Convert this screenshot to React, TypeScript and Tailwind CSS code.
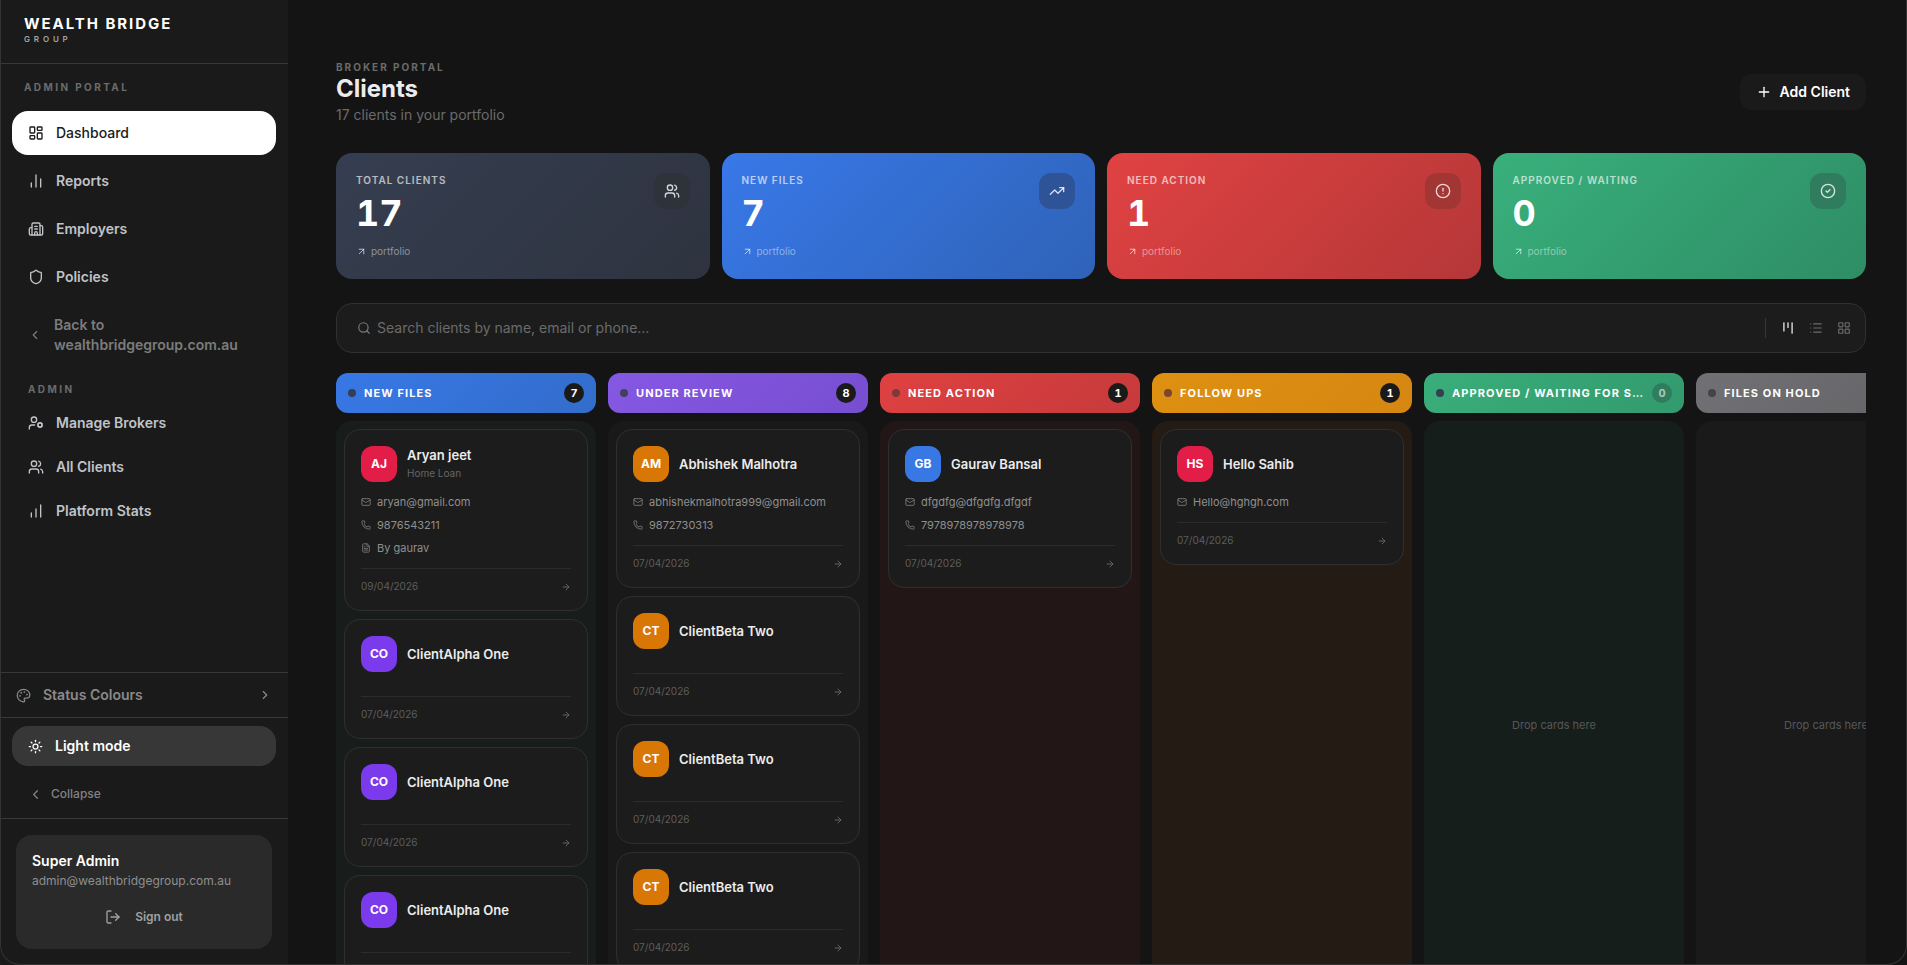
import { useState } from 'react';
import {
  ArrowRight,
  ArrowUpRight,
  Building2,
  ChartNoAxesColumn,
  ChartNoAxesColumnIncreasing,
  ChevronLeft,
  ChevronRight,
  CircleAlert,
  CircleCheck,
  FileText,
  Kanban,
  LayoutDashboard,
  LayoutGrid,
  List,
  LogOut,
  Mail,
  Palette,
  Phone,
  Plus,
  Search,
  Shield,
  Sun,
  TrendingUp,
  UserCog,
  Users,
  type LucideIcon,
} from 'lucide-react';
import clsx from 'clsx';

interface Client {
  initials: string;
  name: string;
  color: string;
  date: string;
  loan?: string;
  email?: string;
  phone?: string;
  by?: string;
}

interface Column {
  title: string;
  count: number;
  header: string;
  dot: string;
  body: string;
  clients: Client[];
}

const alphaOne: Client = { initials: 'CO', name: 'ClientAlpha One', color: 'bg-[#7c3aed]', date: '07/04/2026' };
const betaTwo: Client = { initials: 'CT', name: 'ClientBeta Two', color: 'bg-[#d97706]', date: '07/04/2026' };

const columns: Column[] = [
  {
    title: 'New Files',
    count: 7,
    header: 'bg-linear-135 from-[#3878e6] to-[#336dcb]',
    dot: 'bg-[#353f52]',
    body: 'bg-[#181d1b]',
    clients: [
      {
        initials: 'AJ',
        name: 'Aryan jeet',
        color: 'bg-[#e11d48]',
        date: '09/04/2026',
        loan: 'Home Loan',
        email: 'aryan@gmail.com',
        phone: '9876543211',
        by: 'By gaurav',
      },
      ...Array<Client>(6).fill(alphaOne),
    ],
  },
  {
    title: 'Under Review',
    count: 8,
    header: 'bg-linear-135 from-[#8558e3] to-[#774ed0]',
    dot: 'bg-[#42405c]',
    body: 'bg-[#191919]',
    clients: [
      {
        initials: 'AM',
        name: 'Abhishek Malhotra',
        color: 'bg-[#d97706]',
        date: '07/04/2026',
        email: 'abhishekmalhotra999@gmail.com',
        phone: '9872730313',
      },
      ...Array<Client>(7).fill(betaTwo),
    ],
  },
  {
    title: 'Need Action',
    count: 1,
    header: 'bg-linear-135 from-[#df4141] to-[#c63a3b]',
    dot: 'bg-[#7c3a39]',
    body: 'bg-[#231616]',
    clients: [
      {
        initials: 'GB',
        name: 'Gaurav Bansal',
        color: 'bg-[#3878e4]',
        date: '07/04/2026',
        email: 'dfgdfg@dfgdfg.dfgdf',
        phone: '7978978978978978',
      },
    ],
  },
  {
    title: 'Follow Ups',
    count: 1,
    header: 'bg-linear-135 from-[#de9011] to-[#d68712]',
    dot: 'bg-[#7a4631]',
    body: 'bg-[#241b15]',
    clients: [
      {
        initials: 'HS',
        name: 'Hello Sahib',
        color: 'bg-[#e11d48]',
        date: '07/04/2026',
        email: 'Hello@hghgh.com',
      },
    ],
  },
  {
    title: 'Approved / Waiting for Settlement',
    count: 0,
    header: 'bg-linear-135 from-[#39ae7a] to-[#339a6e]',
    dot: 'bg-[#353f52]',
    body: 'bg-[#161e1b]',
    clients: [],
  },
  {
    title: 'Files on Hold',
    count: 0,
    header: 'bg-linear-135 from-[#717175] to-[#636366]',
    dot: 'bg-[#444444]',
    body: 'bg-[#1a1a1a]',
    clients: [],
  },
];

const stats: { label: string; value: number; icon: LucideIcon; bg: string; iconBg: string }[] = [
  { label: 'Total Clients', value: 17, icon: Users, bg: 'bg-linear-135 from-[#353e50] to-[#2e333f]', iconBg: 'bg-[#2e323a]' },
  { label: 'New Files', value: 7, icon: TrendingUp, bg: 'bg-linear-135 from-[#3878e8] to-[#2f63b8]', iconBg: 'bg-[#2e5497]' },
  { label: 'Need Action', value: 1, icon: CircleAlert, bg: 'bg-linear-135 from-[#e14242] to-[#b53738]', iconBg: 'bg-[#a13635]' },
  { label: 'Approved / Waiting', value: 0, icon: CircleCheck, bg: 'bg-linear-135 from-[#39b07c] to-[#2e8d65]', iconBg: 'bg-[#2f7d5e]' },
];

const views: { label: string; icon: LucideIcon }[] = [
  { label: 'Board view', icon: Kanban },
  { label: 'List view', icon: List },
  { label: 'Grid view', icon: LayoutGrid },
];

function NavItem({ icon: Icon, label, active, compact }: { icon: LucideIcon; label: string; active?: boolean; compact?: boolean }) {
  return (
    <a
      href="#"
      className={clsx(
        'flex items-center gap-3 rounded-2xl px-4 text-sm',
        compact ? 'h-10' : 'h-11',
        active ? 'bg-white font-medium text-[#1a1a1a]' : 'font-semibold text-[#c0c3c7]',
      )}
    >
      <Icon className="size-4 shrink-0" />
      {label}
    </a>
  );
}

function Sidebar() {
  return (
    <aside className="flex w-72 shrink-0 flex-col bg-[#1a1a1a]">
      <div className="flex h-16 flex-col border-b border-[#373737] px-6 pt-3.5">
        <span className="text-[15px] leading-5 font-bold tracking-[0.13em] text-white">WEALTH BRIDGE</span>
        <span className="text-[8px] leading-2.5 font-semibold tracking-[0.48em] text-[#a3a3a3]">GROUP</span>
      </div>

      <nav className="flex flex-1 flex-col px-3">
        <p className="mt-[15px] mb-4 px-3 text-[10px] leading-4 font-bold tracking-[0.24em] text-[#6b6b6b]">ADMIN PORTAL</p>
        <div className="flex flex-col gap-1">
          <NavItem icon={LayoutDashboard} label="Dashboard" active />
          <NavItem icon={ChartNoAxesColumn} label="Reports" />
          <NavItem icon={Building2} label="Employers" />
          <NavItem icon={Shield} label="Policies" />
        </div>
        <a href="#" className="mt-4 flex items-center gap-3 px-4 text-sm leading-5 font-semibold text-[#7c7c7c]">
          <ChevronLeft className="size-3.5 shrink-0" />
          <span>
            Back to
            <br />
            wealthbridgegroup.com.au
          </span>
        </a>
        <p className="mt-6.5 mb-1.5 px-4 text-[10px] leading-4 font-bold tracking-[0.24em] text-[#6b6b6b]">ADMIN</p>
        <div className="flex flex-col gap-1">
          <NavItem icon={UserCog} label="Manage Brokers" compact />
          <NavItem icon={Users} label="All Clients" compact />
          <NavItem icon={ChartNoAxesColumnIncreasing} label="Platform Stats" compact />
        </div>
      </nav>

      <button className="flex h-[45px] items-center gap-3 border-t border-[#373737] px-4 text-sm font-semibold text-[#8a8a8a]">
        <Palette className="size-[15px]" />
        <span className="flex-1 text-left">Status Colours</span>
        <ChevronRight className="size-3.5" />
      </button>
      <div className="flex flex-col gap-2 border-t border-[#373737] px-3 py-2">
        <button className="flex h-10 items-center gap-3 rounded-2xl bg-[#373737] px-4 text-sm font-semibold text-white">
          <Sun className="size-[15px]" />
          Light mode
        </button>
        <button className="flex h-9 items-center gap-2 px-4 pt-1 text-xs font-medium text-[#828282]">
          <ChevronLeft className="size-[15px]" />
          Collapse
        </button>
      </div>
      <div className="border-t border-[#373737] p-4">
        <div className="flex flex-col rounded-2xl bg-[#2a2a2a] px-4 pt-4 pb-3.5">
          <span className="text-sm leading-5 font-semibold text-white">Super Admin</span>
          <span className="text-xs leading-5 text-[#8f8f8f]">admin@wealthbridgegroup.com.au</span>
          <button className="mt-2 flex h-9 items-center justify-center gap-3.5 text-xs font-semibold text-[#a0a0a0]">
            <LogOut className="size-4" />
            Sign out
          </button>
        </div>
      </div>
    </aside>
  );
}

function StatCard({ label, value, icon: Icon, bg, iconBg }: (typeof stats)[number]) {
  return (
    <div className={clsx('flex h-[126px] items-start justify-between rounded-2xl p-5', bg)}>
      <div className="flex flex-col">
        <span className="text-[10px] leading-3.5 font-semibold tracking-[0.1em] text-white/65 uppercase">{label}</span>
        <span className="mt-1.5 text-4xl leading-10 font-bold text-white tabular-nums">{value}</span>
        <span className="mt-2.5 flex items-center gap-1 text-[10px] leading-4 text-white/45">
          <ArrowUpRight className="size-[11px] text-white/70" />
          portfolio
        </span>
      </div>
      <span className={clsx('flex size-9 items-center justify-center rounded-xl text-white/80', iconBg)}>
        <Icon className="size-4" />
      </span>
    </div>
  );
}

function ClientCard({ client }: { client: Client }) {
  const details = [
    { icon: Mail, text: client.email },
    { icon: Phone, text: client.phone },
    { icon: FileText, text: client.by },
  ].filter((d) => d.text);

  return (
    <article className="shrink-0 rounded-2xl border border-[#2d3032] bg-[#1c1c1c] p-4">
      <div className="flex h-9 items-center gap-2.5">
        <span className={clsx('flex size-9 items-center justify-center rounded-xl text-xs font-bold text-white', client.color)}>
          {client.initials}
        </span>
        <div className="flex flex-col">
          <span className="text-[13px] leading-[18px] font-semibold text-[#ececec]">{client.name}</span>
          {client.loan && <span className="text-[10px] leading-[18px] text-[#666666]">{client.loan}</span>}
        </div>
      </div>
      <div className="my-3 flex flex-col gap-[7px]">
        {details.map(({ icon: Icon, text }) => (
          <div key={text} className="flex items-center gap-1.5 text-[11px] leading-4 text-[#8f8f8f]">
            <Icon className="size-2.5 text-[#808080]" />
            {text}
          </div>
        ))}
      </div>
      <div className="flex items-center justify-between border-t border-[#2b2b2b] pt-2.5 text-[10px] leading-[15px] text-[#5c5c5c]">
        <span>{client.date}</span>
        <ArrowRight className="size-2.5 text-[#707070]" />
      </div>
    </article>
  );
}

function BoardColumn({ column }: { column: Column }) {
  return (
    <section className="flex w-[260px] shrink-0 flex-col gap-2">
      <header className={clsx('flex h-10 shrink-0 items-center gap-2 rounded-xl px-3', column.header)}>
        <span className={clsx('size-2 shrink-0 rounded-full', column.dot)} />
        <h2 className="flex-1 truncate text-[11px] font-bold tracking-[0.1em] text-white uppercase">{column.title}</h2>
        <span
          className={clsx(
            'flex size-5 shrink-0 items-center justify-center rounded-full text-[11px] font-bold tabular-nums',
            column.count > 0 ? 'bg-[#1a1a1a] text-white' : 'bg-[#2f7d5e] text-white/60',
          )}
        >
          {column.count}
        </span>
      </header>
      <div className={clsx('flex h-[608px] shrink-0 flex-col gap-2 overflow-hidden rounded-2xl p-2', column.body)}>
        {column.clients.length > 0 ? (
          column.clients.map((client, i) => <ClientCard key={i} client={client} />)
        ) : (
          <p className="m-auto text-[11px] text-[#575757]">Drop cards here</p>
        )}
      </div>
    </section>
  );
}

export default function App() {
  const [view, setView] = useState('Board view');

  return (
    <div className="relative flex h-screen overflow-hidden bg-[#141414] font-['Inter',sans-serif]">
      <Sidebar />

      <main className="flex min-w-0 flex-1 flex-col overflow-hidden pt-[59px] pr-[41px] pl-12">
        <div className="flex items-center justify-between">
          <div className="flex flex-col">
            <span className="text-[10px] leading-4 font-bold tracking-[0.2em] text-[#6b6b6b]">BROKER PORTAL</span>
            <h1 className="text-2xl leading-7 font-bold text-[#ececec]">Clients</h1>
            <p className="mt-0.5 text-sm leading-5 text-[#6b6b6b]">17 clients in your portfolio</p>
          </div>
          <button className="flex h-9 items-center gap-2 rounded-xl bg-[#1a1a1a] px-4 text-sm font-semibold text-white">
            <Plus className="size-4" />
            Add Client
          </button>
        </div>

        <div className="mt-7 grid grid-cols-4 gap-3">
          {stats.map((s) => (
            <StatCard key={s.label} {...s} />
          ))}
        </div>

        <div className="mt-6 flex h-[50px] shrink-0 items-center rounded-2xl border border-[#303030] bg-[#1c1c1c] pr-[7px] pl-5">
          <Search className="size-3.5 shrink-0 text-[#7a7a7a]" />
          <input
            type="text"
            aria-label="Search clients"
            placeholder="Search clients by name, email or phone..."
            className="ml-1.5 min-w-0 flex-1 bg-transparent text-sm text-white outline-none placeholder:text-[#6b6b6b]"
          />
          <div className="flex items-center border-l border-[#373737] pl-2">
            {views.map(({ label, icon: Icon }) => (
              <button
                key={label}
                aria-label={label}
                onClick={() => setView(label)}
                className={clsx(
                  'flex h-5 w-7 items-center justify-center',
                  view === label ? 'text-white' : 'text-[#6b6b6b]',
                )}
              >
                <Icon className="size-3.5" />
              </button>
            ))}
          </div>
        </div>

        <div className="mt-5 flex min-h-0 flex-1 gap-3 overflow-hidden">
          {columns.map((column) => (
            <BoardColumn key={column.title} column={column} />
          ))}
        </div>
      </main>

      {/* window frame */}
      <div className="pointer-events-none absolute inset-0 rounded-b-[20px] border border-t-0 border-[#333333]" />
    </div>
  );
}
